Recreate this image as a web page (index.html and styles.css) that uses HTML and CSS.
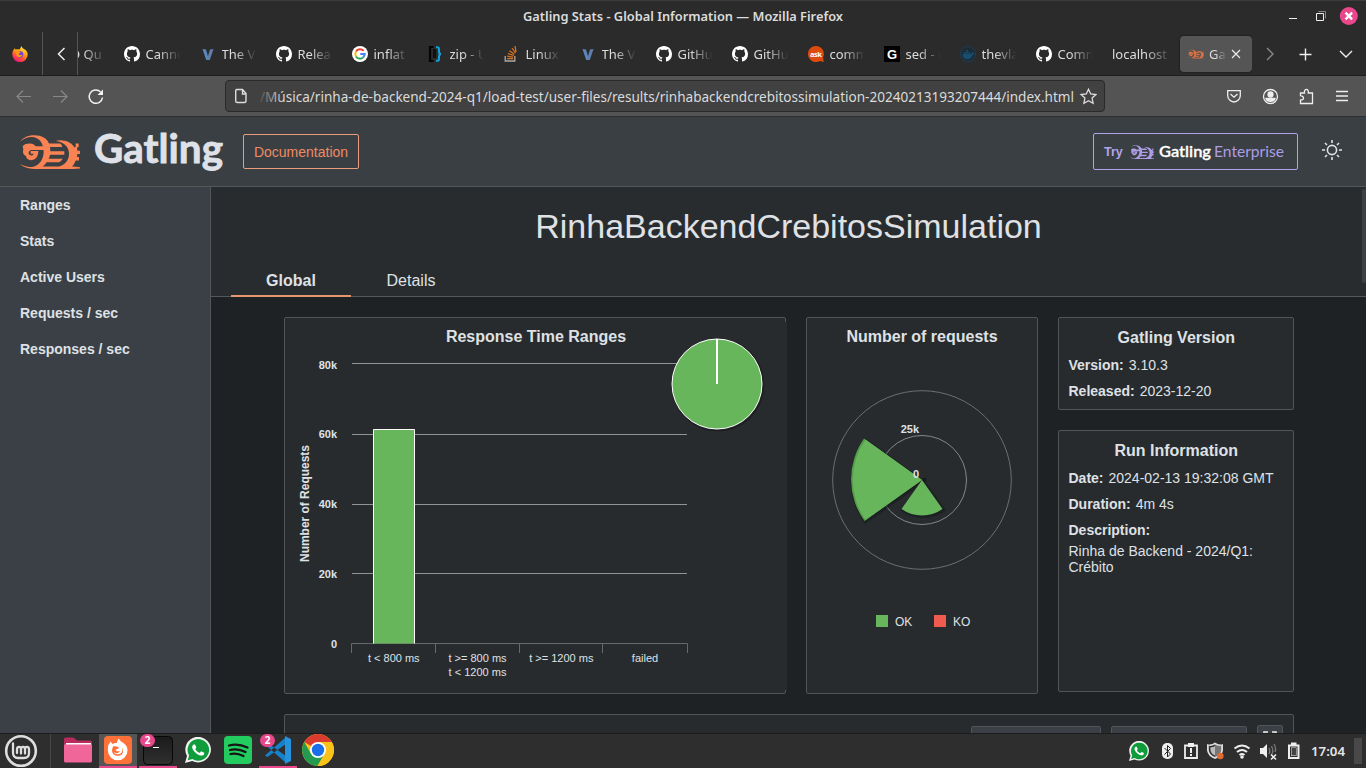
FILE: index.html
```html
<!DOCTYPE html>
<html lang="en">
<head>
<meta charset="utf-8">
<title>Gatling Stats - Global Information</title>
<link rel="stylesheet" href="styles.css">
</head>
<body>
<svg class="defs" width="0" height="0" aria-hidden="true">
  <symbol id="github" viewBox="0 0 16 16"><path fill="#fff" d="M8 0C3.58 0 0 3.58 0 8c0 3.54 2.29 6.53 5.47 7.59.4.07.55-.17.55-.38 0-.19-.01-.82-.01-1.49-2.01.37-2.53-.49-2.69-.94-.09-.23-.48-.94-.82-1.13-.28-.15-.68-.52-.01-.53.63-.01 1.08.58 1.23.82.72 1.21 1.87.87 2.33.66.07-.52.28-.87.51-1.07-1.78-.2-3.64-.89-3.64-3.95 0-.87.31-1.59.82-2.15-.08-.2-.36-1.02.08-2.12 0 0 .67-.21 2.2.82.64-.18 1.32-.27 2-.27.68 0 1.36.09 2 .27 1.53-1.04 2.2-.82 2.2-.82.44 1.1.16 1.92.08 2.12.51.56.82 1.27.82 2.15 0 3.07-1.87 3.75-3.65 3.95.29.25.54.73.54 1.48 0 1.07-.01 1.93-.01 2.2 0 .21.15.46.55.38A8.013 8.013 0 0016 8c0-4.42-3.58-8-8-8z"/></symbol>
  <symbol id="vlang" viewBox="0 0 16 16"><path fill="#5d87bf" d="M2.500 3l3.500.4 3 10.600H6.200z"/><path fill="#5f80ad" d="M10 3.400L13.500 3 9.800 14H6.800z"/></symbol>
  <symbol id="gatling" viewBox="0 0 180 100">
    <path d="M0 20C12 5 27 1 43 1c22 0 38 9 44 24h33c3 1 5 4 7 10H90l1 13h42v10H90c-1 5-2 8-4 12h42c-3 5-6 8-10 10H80c-3 5-7 9-12 13h49c18-6 30-18 30-38 0-19-14-34-40-37 7-3 14-3 20-2 20 2 30 10 36 20h4V25h9v11h-5l1 10h12v10h-12l-1 9h6v10h-10c-3 8-7 14-11 18 12 0 23 1 33 3v2c-30 3-70 3-110 3C36 101 14 99 0 85c14 7 26 9 37 9 21-4 34-23 34-45C71 25 58 6 35 6 22 6 10 11 0 20z"/>
    <path d="M8 33C12 27 21 25 29 25c9 0 15 4 18 8h28v11H34c-8 1-11 11-4 15 5 3 9 1 11-4H32v-8h23c0 17-9 27-22 27-9 0-14-5-15-12C9 58 8 51 10 43z"/>
  </symbol>
  <symbol id="whatsapp" viewBox="0 0 26 26">
    <path fill="#f2f2f2" d="M0 26l2-7A12.8 12.8 0 1 1 7.200 24z"/>
    <path fill="#0f9d3c" d="M2.700 23.300l1.400-4.800A10.800 10.800 0 1 1 7.500 22z"/>
    <path fill="#fff" transform="translate(1.200 1)" d="M17.472 14.382c-.297-.149-1.758-.867-2.03-.967-.273-.099-.471-.148-.67.15-.197.297-.767.966-.94 1.164-.173.199-.347.223-.644.075-.297-.15-1.255-.463-2.39-1.475-.883-.788-1.480-1.761-1.653-2.059-.173-.297-.018-.458.13-.606.134-.133.298-.347.446-.520.149-.174.198-.298.298-.497.099-.198.050-.371-.025-.520-.075-.149-.669-1.612-.916-2.207-.242-.579-.487-.5-.669-.510-.173-.008-.371-.010-.570-.010-.198 0-.520.074-.792.372-.272.297-1.040 1.016-1.040 2.479 0 1.462 1.065 2.875 1.213 3.074.149.198 2.096 3.200 5.077 4.487.709.306 1.262.489 1.694.625.712.227 1.360.195 1.871.118.571-.085 1.758-.719 2.006-1.413.248-.694.248-1.289.173-1.413-.074-.124-.272-.198-.570-.347"/>
  </symbol>
</svg>

<div class="titlebar">
  <svg class="window-title" width="330" height="24"><text x="1" y="17" textLength="320" lengthAdjust="spacingAndGlyphs">Gatling Stats - Global Information — Mozilla Firefox</text></svg>
  <svg class="window-buttons" width="78" height="24" viewBox="0 0 78 24" fill="none">
    <path d="M1 14.500h8" stroke="#eee"/>
    <path d="M30.500 7.500h7v7" stroke="#888"/><path d="M28.500 9.500h7v7h-7z" stroke="#eee"/>
    <circle cx="60.800" cy="12" r="9" fill="#e8488b"/><path d="M57.500 8.700l6.600 6.600m0-6.600l-6.600 6.600" stroke="#fff" stroke-width="2.400"/>
  </svg>
</div>

<div class="tabstrip">
  <div class="pinned">
    <svg width="16" height="16" viewBox="0 0 16 16"><defs><linearGradient id="fx" x1=".8" y1="0" x2=".3" y2="1"><stop offset="0" stop-color="#fff44f"/><stop offset=".45" stop-color="#ff980e"/><stop offset=".8" stop-color="#ff3750"/><stop offset="1" stop-color="#e31587"/></linearGradient></defs><path fill="url(#fx)" d="M1.200 4.500L2.500 2.200l1.200 1.300C5 3 6.500 3 7.600 3.500L9.500 0c.5 1.800 1.600 2.400 3 3.300 2 1.400 3.200 3 3.200 5.200a7.700 7.700 0 0 1-15.400 0C.3 6.700.6 5.600 1.200 4.500z"/><circle cx="8" cy="8.500" r="3.300" fill="#7542d8"/><path fill="#ff980e" d="M3.500 5.500c2-.5 4 0 5 1L6.500 8C7.500 9.500 9 9 10.500 9c-1 2.500-4.500 3-6 .5z"/></svg>
  </div>
  <div class="scroll-left"><svg width="12" height="16" viewBox="0 0 12 16"><path d="M8.500 2L2.500 8l6 6" fill="none" stroke="#eee" stroke-width="1.500"/></svg></div>
  <div class="tabs">
    <div class="tab cut"><span>O Qu</span></div>
    <div class="tab"><svg><use href="#github"/></svg><span>Canno</span></div>
    <div class="tab"><svg><use href="#vlang"/></svg><span>The V</span></div>
    <div class="tab"><svg><use href="#github"/></svg><span>Relea</span></div>
    <div class="tab"><svg viewBox="0 0 16 16"><circle cx="8" cy="8" r="8" fill="#fff"/><g fill="none" stroke-width="2"><path d="M11.600 4.900A4.700 4.700 0 0 0 4 5.600" stroke="#ea4335"/><path d="M4 5.600a4.700 4.700 0 0 0 0 4.800" stroke="#fbbc05"/><path d="M4 10.400a4.700 4.700 0 0 0 7 1.200" stroke="#34a853"/><path d="M11 11.600c1.200-1 1.700-2.200 1.700-3.600H8.300" stroke="#4285f4"/></g></svg><span>inflat</span></div>
    <div class="tab"><svg viewBox="0 0 16 16" fill="none"><path d="M5.500 1H2v14h3.500" stroke="#050505" stroke-width="2.200"/><path d="M5 3h3v9H5z" fill="#111"/><path d="M8 1.200h1.500c1.500 0 1.500 1 1.500 4 0 2 .3 2.800 2 2.800-1.700 0-2 .8-2 2.800 0 3 0 4-1.500 4H8" stroke="#12a3dc" stroke-width="2"/></svg><span>zip - U</span></div>
    <div class="tab"><svg viewBox="0 0 16 16" fill="none"><path d="M1.200 10v5h9.600v-5" stroke="#aaa" stroke-width="1.300"/><path d="M3 12.700h6M3.200 10.200l6 .9M4 7.500l5.700 2M5.400 4.800l5 3.500M8 2l3.500 5M11 0l1 6" stroke="#d9751e" stroke-width="1.300"/></svg><span>Linux</span></div>
    <div class="tab"><svg><use href="#vlang"/></svg><span>The V</span></div>
    <div class="tab"><svg><use href="#github"/></svg><span>GitHu</span></div>
    <div class="tab"><svg><use href="#github"/></svg><span>GitHu</span></div>
    <div class="tab"><svg viewBox="0 0 16 16"><path fill="#dd4b0c" d="M8 0a8 8 0 1 0 4 14.900l3.800 1-.8-4.300A8 8 0 0 0 8 0z"/><text x="2" y="10.500" class="ask" textLength="12">ask</text></svg><span>comm</span></div>
    <div class="tab"><svg viewBox="0 0 16 16"><path fill="#000" d="M0 0h16v16H0z"/><text x="3" y="13" class="gee">G</text></svg><span>sed - c</span></div>
    <div class="tab"><svg viewBox="0 0 16 16"><circle cx="8" cy="8" r="7.500" fill="#1d2b35" stroke="#1c4058"/><path fill="#174f73" d="M2.500 8h9c0-1 .2-1.700.7-2.200.7.500 1 1.200 1 1.700h1.300c-.4 1.200-1.200 1.400-2 1.400C11.500 12 9.500 13 7 13c-3 0-4.600-2-4.500-5zM3.700 6h2v1.500h-2zM6 6h2v1.500H6zM8.200 6h2v1.500h-2zM6 4h2v1.500H6z"/></svg><span>thevla</span></div>
    <div class="tab"><svg><use href="#github"/></svg><span>Comm</span></div>
    <div class="tab text-only"><span>localhost</span></div>
    <div class="tab active"><svg class="fav"><use href="#gatling"/></svg><span>Gat</span><svg class="close" viewBox="0 0 10 10"><path d="M1 1l8 8m0-8L1 9" stroke="#eee" stroke-width="1.100"/></svg></div>
  </div>
  <svg class="strip-actions" width="114" height="20" viewBox="0 0 114 20" fill="none" stroke-width="1.400"><path d="M15 4l6 6-6 6" stroke="#888"/><path d="M53.500 4.500v12M47.500 10.500h12" stroke="#eee"/><path d="M88 7l6 6 6-6" stroke="#eee"/></svg>
</div>

<div class="toolbar">
  <svg class="nav" width="90" height="20" viewBox="0 0 90 20" fill="none" stroke-width="1.200"><g stroke="#888"><path d="M15 10.500H1.500M7 4.500L1 10.500l6 6M37 10.500h13.500M45 4.500l6 6-6 6"/></g><path d="M86.500 11.500a6.700 6.700 0 1 1-2-5.700" stroke="#f2f2f2" stroke-width="1.500"/><path d="M87 3.500V9h-5.500z" fill="#f2f2f2"/></svg>
  <div class="urlbar">
    <svg width="14" height="16" viewBox="0 0 14 16" fill="none" stroke="#ddd" stroke-width="1.400"><path d="M2.500 1.500h6l3.500 4v7.500c0 1-.5 1.500-1.500 1.500h-7C2.500 14.500 1.700 14 1.700 13V2.500zM8.500 1.500V6H12"/></svg>
    <svg class="url" width="816" height="28"><defs><linearGradient id="fade" gradientUnits="userSpaceOnUse" x1="0" x2="24" y1="0" y2="0"><stop offset="0" stop-color="#555"/><stop offset="1" stop-color="#ddd"/></linearGradient></defs><text x="0" y="20" fill="url(#fade)" textLength="814" lengthAdjust="spacingAndGlyphs">/Música/rinha-de-backend-2024-q1/load-test/user-files/results/rinhabackendcrebitossimulation-20240213193207444/index.html</text></svg>
    <svg width="18" height="18" viewBox="0 0 18 18"><path d="M9.500 2.300l2.200 4.700 5.200.6-3.800 3.500 1 5.100-4.600-2.500-4.600 2.500 1-5.100L2.100 7.600l5.200-.6z" fill="none" stroke="#ddd" stroke-width="1.300"/></svg>
  </div>
  <svg class="tools" width="124" height="20" viewBox="0 0 124 20" fill="none" stroke="#eee" stroke-width="1.300">
    <path d="M1.700 4.700h12.600v4.800c0 3.500-3 6.500-6.300 6.500s-6.300-3-6.300-6.500zM4.500 8L8 11.200 11.500 8"/>
    <circle cx="44.500" cy="10.500" r="7"/><circle cx="44.500" cy="8.500" r="2.500" fill="#eee"/><path d="M40 12.500h9c-.5 2-2 2.800-4.500 2.800S40.500 14.500 40 12.500z" fill="#eee"/>
    <path d="M74.500 10V7h4c-1-4.800 4.800-4.800 3.800 0H86.500v10.500h-12v-3.500c4 .5 4-4.500 0-4"/>
    <path d="M110 5.500h12M110 10h12M110 14.500h12"/>
  </svg>
</div>

<header class="header">
  <svg class="logo" width="60" height="34" viewBox="0 0 180 100" preserveAspectRatio="none"><use href="#gatling"/></svg>
  <svg class="wordmark" width="140" height="54"><text x="1" y="33" textLength="129" lengthAdjust="spacingAndGlyphs">Gatling</text></svg>
  <a class="doc">Documentation</a>
  <a class="enterprise"><b>Try</b><svg class="mini" width="24" height="14" viewBox="0 0 180 100" preserveAspectRatio="none"><use href="#gatling"/></svg><svg width="130" height="26"><text class="ent-a" x="0" y="18" textLength="52" lengthAdjust="spacingAndGlyphs">Gatling</text><text class="ent-b" x="55" y="18" textLength="70" lengthAdjust="spacingAndGlyphs">Enterprise</text></svg></a>
  <svg class="sun" width="20" height="20" viewBox="0 0 20 20" fill="none" stroke="#dfe1e5" stroke-width="1.600"><circle cx="10" cy="10" r="4.600"/><path d="M10 0v3M10 17v3M0 10h3M17 10h3M3 3l2 2M15 15l2 2M3 17l2-2M15 5l2-2"/></svg>
</header>

<div class="page">
  <nav class="sidebar"><a>Ranges</a><a>Stats</a><a>Active Users</a><a>Requests / sec</a><a>Responses / sec</a></nav>
  <main class="main">
    <div class="head">
      <h1>RinhaBackendCrebitosSimulation</h1>
      <div class="report-tabs"><a class="on">Global</a><a>Details</a></div>
    </div>
    <div class="cards">
      <section class="card ranges">
        <svg width="502" height="376" viewBox="0 0 502 376">
          <path d="M501.500 4v368" stroke="#272b2e" stroke-width="3"/>
          <text class="ctitle" x="251" y="24" text-anchor="middle">Response Time Ranges</text>
          <g stroke="#919395"><path d="M67 45.500h335M67 116.500h335M67 186.500h335M67 255.500h335"/></g>
          <path d="M66.500 335V325.500h336V335M150.500 325.500V335M234.500 325.500V335M317.500 325.500V335" stroke="#66696c" fill="none"/>
          <path d="M88.500 325.500v-214h41v214" fill="#68b65c" stroke="#fff"/>
          <g class="ylab" text-anchor="end"><text x="52" y="51">80k</text><text x="52" y="120">60k</text><text x="52" y="190">40k</text><text x="52" y="260">20k</text><text x="52" y="330">0</text></g>
          <text class="ytitle" transform="translate(24 185.500) rotate(-90)" text-anchor="middle" textLength="117">Number of Requests</text>
          <g class="xlab" text-anchor="middle"><text x="108.800" y="344">t &lt; 800 ms</text><text x="192.500" y="344">t &gt;= 800 ms</text><text x="192.500" y="358">t &lt; 1200 ms</text><text x="276.300" y="344">t &gt;= 1200 ms</text><text x="360" y="344">failed</text></g>
          <circle cx="433" cy="67" r="45.500" fill="none" stroke="#15181a" stroke-width="1.500" opacity=".6"/>
          <circle cx="432" cy="66" r="45" fill="#68b65c" stroke="#fff"/><path d="M432 21v45" stroke="#fff" stroke-width="2"/>
        </svg>
      </section>
      <section class="card requests">
        <svg width="230" height="374" viewBox="0 0 230 374">
          <text class="ctitle" x="115" y="24" text-anchor="middle">Number of requests</text>
          <circle cx="115" cy="162" r="89.300" fill="none" stroke="#6c6f72"/><circle cx="115" cy="162" r="44.500" fill="none" stroke="#85888a"/>
          <g stroke="#14181a" stroke-width="3" opacity=".5"><path d="M116 163.500L58.500 122A70 70 0 0 0 58.500 204z"/><path d="M116 163L95.500 192A36 36 0 0 0 137 192z"/></g>
          <path fill="#549b48" d="M115 162L57 120.500A71 71 0 0 0 57.500 203z"/>
          <path fill="#68b65c" d="M115 162L58.500 121.500A69.500 69.500 0 0 0 58.500 202z"/><path fill="#68b65c" d="M115 162L94.500 191A35.500 35.500 0 0 0 135.500 191z"/>
          <path d="M117 160v4M118.500 160v3" stroke="#121416"/>
          <g class="ylab" text-anchor="end"><text x="112" y="115">25k</text><text x="112" y="160">0</text></g>
          <path fill="#68b65c" d="M69 297h12v12H69z"/><path fill="#f15b4f" d="M127 297h12v12h-12z"/>
          <g class="legend"><text x="88" y="308">OK</text><text x="146" y="308">KO</text></g>
        </svg>
      </section>
      <div class="side">
        <section class="card info"><h2>Gatling Version</h2><p><b>Version:</b>3.10.3</p><p><b>Released:</b>2023-12-20</p></section>
        <section class="card info run"><h2>Run Information</h2><p><b>Date:</b>2024-02-13 19:32:08 GMT</p><p><b>Duration:</b>4m 4s</p><p><b>Description:</b></p><div class="desc">Rinha de Backend - 2024/Q1: Crébito</div></section>
      </div>
    </div>
    <div class="card stats"><span class="btn a"></span><span class="btn b"></span><span class="btn c"><svg width="14" height="14" viewBox="0 0 14 14"><path d="M1 5V1h4M9 1h4v4M1 9v4h4M9 13h4V9" fill="none" stroke="#eee" stroke-width="1.600"/></svg></span></div>
    <i class="thumb"></i>
  </main>
</div>

<footer class="taskbar">
  <svg class="mint" width="34" height="34" viewBox="0 0 34 34" fill="none"><circle cx="17" cy="17" r="14.800" fill="#2d2d2d" stroke="#ddd" stroke-width="2.600"/><path d="M9 9.500v9c0 4 2 5.500 5 5.500h6c3 0 5-2 5-5v-3.500c0-3.500-4-3.500-4 0v4m0-4c0-3.500-4-3.500-4 0v4m0-4c0-3.500-4-3.500-4 0v3.500" stroke="#ddd" stroke-width="2.300" stroke-linecap="round"/></svg>
  <i class="sep"></i>
  <div class="app folder"><svg width="30" height="28" viewBox="0 0 30 28"><path fill="#b82c5d" d="M1 3q0-1.500 1.500-1.500h8L14 4.500h13.500Q29 4.500 29 6v8H1z"/><path fill="#fff" d="M3 7h25v4H3z"/><path fill="#f06698" d="M1 8.500h28V25q0 1.500-1.500 1.500h-25Q1 26.500 1 25z"/></svg></div>
  <div class="app current"><svg width="28" height="28" viewBox="0 0 28 28"><rect width="28" height="28" rx="4" fill="#ff7139"/><path fill="#fff" d="M4 10L6.500 5.500l2 2.500q2-1.500 4.500-1c0-2 1-3.500 2-4.500.5 2 2 3 4.500 4.500 3 2.500 4 4.500 4 7.500a9.800 9.800 0 0 1-19.600 0c0-1.500 0-3 .1-4.500z"/><path fill="#ff7139" d="M9 10.500c3-.8 5 .2 6 1.500l-3.500 2c1.500 1.800 3 1.500 4.500.8-1 2.800-4.500 3-6.200 1.200 1 3 7.500 3.500 8.500-1 .3-1.500 0-2.800-.8-4 2 2 2.300 5 .5 7.200-2.500 2.500-7.500 2-9.300-1-1-2-.8-4 .3-6.700z"/></svg></div>
  <div class="app open"><svg width="30" height="29" viewBox="0 0 30 29"><defs><linearGradient id="tm" x2="0" y2="1"><stop stop-color="#1b1b1b"/><stop offset="1" stop-color="#303030"/></linearGradient></defs><rect x=".5" y=".5" width="29" height="28" rx="4" fill="url(#tm)" stroke="#080808"/><path d="M10 11.500h6" stroke="#fff"/></svg><em>2</em></div>
  <div class="app"><svg width="26" height="26"><use href="#whatsapp"/></svg></div>
  <div class="app"><svg width="28" height="28" viewBox="0 0 28 28"><rect width="28" height="28" rx="4" fill="#22cc5e"/><path d="M5 9.500q9-2.500 18.500 2M6 14q8-2 15.500 2M6.500 18q6.500-1.500 13 2" fill="none" stroke="#151515" stroke-width="2.300" stroke-linecap="round"/></svg></div>
  <div class="app open"><svg width="28" height="28" viewBox="0 0 28 28"><path d="M1 8.500L3.500 7 22 20v7zM1 19.500L3.500 21 22 8V1z" fill="#1680c8"/><path fill="#2492dc" d="M21 0l6 3v22l-6 3z"/></svg><em>2</em></div>
  <div class="app"><svg width="32" height="32" viewBox="0 0 32 32"><circle cx="16" cy="16" r="16" fill="#f9c21b"/><path fill="#db3a2e" d="M16 16L2.200 8A16 16 0 0 1 29.800 8H16z"/><path fill="#239a50" d="M2.200 8A16 16 0 0 0 15.500 32l7-12L9.100 20z"/><path fill="#f9c21b" d="M22.500 20l-7 12A16 16 0 0 0 29.800 8H16z"/><circle cx="16" cy="16" r="8" fill="#fff"/><circle cx="16" cy="16" r="6.200" fill="#1a6fe8"/></svg></div>
  <svg class="tray" width="174" height="24" viewBox="0 0 174 24">
    <use href="#whatsapp" x="0" y="2" width="20" height="20"/>
    <rect x="33" y="4" width="11" height="16" rx="5" fill="#eee"/><path d="M35.500 9l6 6-3 3V6.500l3 3-6 6" fill="none" stroke="#222"/>
    <path d="M56 6.500h12v12.500H56z" fill="none" stroke="#eee" stroke-width="1.800"/><path d="M59 4h6v4h-6zM61 9h2v5h-2zM61 15h2v2h-2z" fill="#eee"/>
    <path d="M86 3.500q4 3 8 1.500v6.500q-1 6-8 8.500-7-2.500-8-8.500V5q4 1.500 8-1.500z" fill="#ddd"/><path d="M86 5.500v12.500q-6-2.500-6.200-7V6.800q3.500.5 6.200-1.300z" fill="#2e2e2e"/><path d="M86 7v9.500q-4.500-2-4.600-6V8.200q2.500.2 4.600-1.200z" fill="#bbb"/><path d="M86 5.500v12.500q6-2.500 6.200-7V6.800q-3.500.5-6.200-1.300z" fill="#777"/><circle cx="91.300" cy="17" r="3.300" fill="#e06b34"/>
    <g fill="none" stroke="#eee" stroke-width="2"><path d="M105.500 9.500q7.500-6 15 0M108 13q5-4 10 0M110.500 16q2.500-2 5 0"/></g><circle cx="113" cy="18" r="1.800" fill="#eee"/>
    <path d="M131 9h3l4-4v14l-4-4h-3z" fill="#eee"/><path d="M140 9q1.500 3 0 6M142.500 7q2.500 5 0 9M145 5q2.500 4 1 8" fill="none" stroke="#777" stroke-width="1.400"/><path d="M142 15.500l5 5m0-5l-5 5" stroke="#eee" stroke-width="1.600"/>
    <path d="M160 6.500h9.500v12.500H160z" fill="none" stroke="#eee" stroke-width="2"/><path d="M162 3.500h5.500v3H162zM162 8.500h5.500v8.500H162z" fill="#eee"/><path d="M162.500 9h4.500v7.500h-4.500z" fill="#444"/>
  </svg>
  <svg class="clock" width="36" height="20"><text x="0" y="15" textLength="34" lengthAdjust="spacingAndGlyphs">17:04</text></svg>
  <i class="desk"></i>
</footer>
</body>
</html>
```
FILE: styles.css
```css
* { box-sizing: border-box; }
body { margin: 0; width: 1366px; height: 768px; overflow: hidden; display: flex; flex-direction: column; background: #1f2224; color: #dfe1e5; font-family: "Liberation Sans", Arial, sans-serif; }
svg { display: block; flex: none; }
.defs { position: absolute; }

.titlebar { height: 32px; flex: none; background: #2b2b2b; border-top: 1px solid #3c3c3c; display: grid; grid-template-columns: 522px 1fr 78px; align-items: center; }
.window-title { grid-column: 2; margin-top: -1px; }
.window-title text { font: 600 13px "Noto Sans", sans-serif; fill: #dcdcdc; }
.window-buttons { margin-top: -2px; }

.tabstrip { height: 44px; flex: none; background: #2b2b2b; border-bottom: 1px solid #1d1d1d; display: flex; }
.pinned { width: 43px; border-right: 1px solid #555; padding: 14px 0 0 12px; }
.scroll-left { width: 35px; border-right: 1px solid #555; padding: 14px 0 0 13px; }
.tabs { flex: 1; overflow: hidden; display: flex; font: 13px "Noto Sans", sans-serif; color: #dcdcdc; }
.tab { width: 76px; flex: none; height: 36px; margin-top: 4px; padding-left: 8px; display: flex; align-items: center; gap: 5.500px; }
.tab svg { width: 16px; height: 16px; }
.tab span { width: 36px; overflow: hidden; white-space: nowrap; line-height: 20px; -webkit-mask-image: linear-gradient(90deg, #000 35%, transparent 96%); mask-image: linear-gradient(90deg, #000 35%, transparent 96%); }
.tab.cut { width: 38px; padding: 0; }
.tab.cut span { margin-left: -8px; width: 38px; }
.tab.text-only span { width: 60px; -webkit-mask-image: linear-gradient(90deg, #000 55%, transparent); mask-image: linear-gradient(90deg, #000 55%, transparent); }
.tab.active { width: 72px; background: #555; border-radius: 4px; gap: 5px; box-shadow: 0 0 2px #111; }
.tab.active .fav { fill: #e87142; }
.tab.active span { width: 18px; }
.tab.active .close { width: 10px; height: 10px; margin-left: -1px; }
.ask { font: bold 7.500px "Noto Sans", sans-serif; fill: #fff; }
.gee { font: bold 13px "Liberation Sans", sans-serif; fill: #fff; }
.strip-actions { margin-top: 12px; }

.toolbar { height: 41px; flex: none; background: #545454; border-bottom: 1px solid #2d2f31; display: flex; align-items: center; }
.nav { margin-left: 16px; }
.urlbar { margin-left: 119px; width: 880px; height: 32px; background: #414141; border: 1px solid #2a2a2a; border-radius: 4px; display: flex; align-items: center; padding-left: 8px; gap: 5px; }
.urlbar .url { margin-left: 7px; margin-right: -2px; }
.url text { font: 15px "Noto Sans", sans-serif; }
.tools { margin-left: 121px; }

.header { height: 70px; flex: none; background: #3a3f44; border-bottom: 1px solid #55585a; display: flex; align-items: center; padding-left: 20px; }
.logo { fill: #fa8353; }
.wordmark { margin-left: 13px; margin-top: 10px; }
.wordmark text { font: 700 41px Lato, sans-serif; fill: #dfe1e8; stroke: #dfe1e8; stroke-width: .8px; }
.doc { margin-left: 10px; width: 116px; height: 35px; border: 1px solid #e99d7b; border-radius: 2px; color: #f08a62; font-size: 14px; line-height: 34px; text-align: center; }
.enterprise { margin-left: 734px; width: 205px; height: 37px; border: 1px solid #b2a2e8; border-radius: 2px; display: flex; align-items: center; padding-left: 10px; color: #b3a3e8; font-size: 12.500px; }
.mini { fill: #ad9de4; margin-left: 7px; margin-right: 5px; }
.ent-a { font: 600 16px Lato, sans-serif; fill: #fff; stroke: #fff; stroke-width: .3px; }
.ent-b { font: 16px Lato, sans-serif; fill: #ad9de4; }
.sun { margin-left: 24px; margin-top: -3px; }

.page { height: 546px; flex: none; display: flex; }
.sidebar { width: 211px; background: #3a4045; border-right: 1px solid #55585a; display: flex; flex-direction: column; }
.sidebar a { font-size: 14px; font-weight: bold; height: 36px; line-height: 36px; padding-left: 20px; }
.main { flex: 1; position: relative; overflow: hidden; background: #1f2224; }
.head { height: 110px; background: #282c2f; border-bottom: 1px solid #55585a; display: flex; flex-direction: column; justify-content: space-between; }
h1 { margin: 19px 0 0; text-align: center; font-size: 34px; font-weight: normal; line-height: 40px; }
.report-tabs { display: flex; padding-left: 20px; height: 33px; margin-bottom: -1px; }
.report-tabs a { width: 120px; text-align: center; font-size: 16px; line-height: 33px; }
.report-tabs .on { font-weight: bold; border-bottom: 2px solid #e8946c; }
.cards { display: flex; align-items: flex-start; gap: 20px; padding: 20px 0 0 73px; }
.card { background: #272b2e; border: 1px solid #525557; border-radius: 2px; }
.ranges { width: 502px; height: 377px; }
.requests { width: 232px; height: 377px; }
.ctitle { font: bold 16px "Liberation Sans", sans-serif; fill: #dfe1e5; }
.ylab { font: bold 11px "Liberation Sans", sans-serif; fill: #dfe1e5; }
.ytitle { font: bold 12px "Liberation Sans", sans-serif; fill: #dfe1e5; }
.xlab { font: 11px "Liberation Sans", sans-serif; fill: #dfe1e5; }
.legend { font: 12px "Liberation Sans", sans-serif; fill: #dfe1e5; }
.side { width: 236px; display: flex; flex-direction: column; gap: 20px; }
.info { height: 93px; padding: 9px 9px 9px 9.500px; font-size: 14px; }
.info.run { height: 262px; }
.info h2 { margin: 2px 0 10px; font-size: 16px; line-height: 18px; text-align: center; }
.info p { margin: 0 0 10px; line-height: 16px; white-space: nowrap; }
.info b { margin-right: 5px; }
.desc { line-height: 16px; margin-top: -5px; }
.stats { margin: 20px 0 0 73px; width: 1010px; height: 80px; padding: 11px 0 0 686px; display: flex; align-items: flex-start; gap: 10px; }
.btn { height: 30px; background: #3a4045; border: 1px solid #525557; border-radius: 2px; }
.btn.a { width: 130px; }
.btn.b { width: 136px; }
.btn.c { width: 26px; margin-top: -1px; padding: 5px; }
.thumb { position: absolute; right: 0; top: 2px; width: 4px; height: 94px; background: #3d4143; border-radius: 2px; }

.taskbar { height: 35px; flex: none; background: #2e2e2e; border-top: 1px solid #1c1c1c; display: flex; align-items: center; }
.mint { margin-left: 4px; }
.sep { width: 1px; height: 34px; margin: 0 8px 0 12px; background: #484848; }
.app { position: relative; width: 38px; height: 34px; margin-right: 2px; display: flex; align-items: center; justify-content: center; padding-bottom: 2px; }
.app.current { background: #555; }
.app.current, .app.open { border-bottom: 2px solid #e8488b; padding-bottom: 0; }
.app em { position: absolute; left: 1px; top: 0; width: 15px; height: 13px; border-radius: 7px; background: #e8488b; color: #fff; font: bold 10px/13px "Noto Sans", sans-serif; text-align: center; }
.tray { margin-left: auto; }
.clock { margin-left: 8px; }
.clock text { font: 600 13px "Noto Sans", sans-serif; fill: #e5e5e5; }
.desk { width: 8px; height: 26px; margin: 0 4px 0 7px; background: #484848; }
```
